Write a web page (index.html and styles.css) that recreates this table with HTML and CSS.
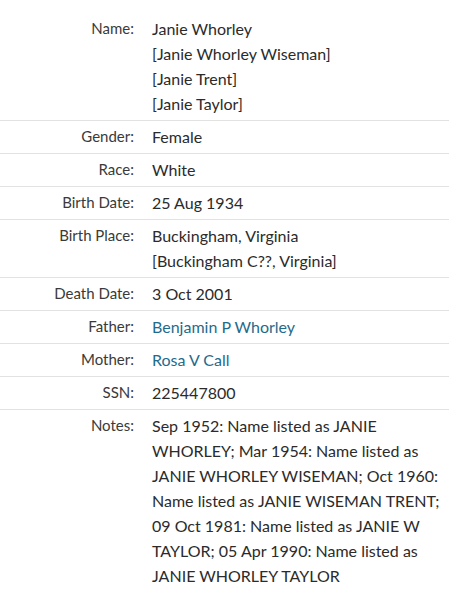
FILE: index.html
```html
<!DOCTYPE html>
<html lang="en">
<head>
<meta charset="utf-8">
<title>Record</title>
<link rel="stylesheet" href="styles.css">
</head>
<body>
<div class="record">
  <div class="row">
    <div class="label">Name:</div>
    <div class="value">Janie Whorley<br>[Janie Whorley Wiseman]<br>[Janie Trent]<br>[Janie Taylor]</div>
  </div>
  <div class="row">
    <div class="label">Gender:</div>
    <div class="value">Female</div>
  </div>
  <div class="row">
    <div class="label">Race:</div>
    <div class="value">White</div>
  </div>
  <div class="row">
    <div class="label">Birth Date:</div>
    <div class="value">25 Aug 1934</div>
  </div>
  <div class="row">
    <div class="label">Birth Place:</div>
    <div class="value">Buckingham, Virginia<br>[Buckingham C??, Virginia]</div>
  </div>
  <div class="row">
    <div class="label">Death Date:</div>
    <div class="value">3 Oct 2001</div>
  </div>
  <div class="row">
    <div class="label">Father:</div>
    <div class="value"><a class="link" href="#">Benjamin P Whorley</a></div>
  </div>
  <div class="row">
    <div class="label">Mother:</div>
    <div class="value"><a class="link" href="#">Rosa V Call</a></div>
  </div>
  <div class="row">
    <div class="label">SSN:</div>
    <div class="value">225447800</div>
  </div>
  <div class="row last">
    <div class="label">Notes:</div>
    <div class="value">Sep 1952: Name listed as JANIE WHORLEY; Mar 1954: Name listed as JANIE WHORLEY WISEMAN; Oct 1960: Name listed as JANIE WISEMAN TRENT; 09 Oct 1981: Name listed as JANIE W TAYLOR; 05 Apr 1990: Name listed as JANIE WHORLEY TAYLOR</div>
  </div>
</div>
</body>
</html>
```

FILE: styles.css
```css
html, body {
  margin: 0;
  padding: 0;
  background: #ffffff;
}

body {
  font-family: Lato, "Liberation Sans", sans-serif;
  color: #333333;
}

.record {
  padding-top: 13px;
  width: 449px;
}

.row {
  display: grid;
  grid-template-columns: 134px 1fr;
  column-gap: 18px;
  padding: 3px 0 4px;
  border-bottom: 1px solid #e2e2e2;
}

.row.last {
  border-bottom: none;
}

.label {
  text-align: right;
  font-size: 15px;
  line-height: 25px;
  color: #3a3a3a;
}

.value {
  font-size: 16px;
  line-height: 25px;
  color: #2b2b2b;
}

.link {
  color: #1f6b8c;
  text-decoration: none;
}
```
